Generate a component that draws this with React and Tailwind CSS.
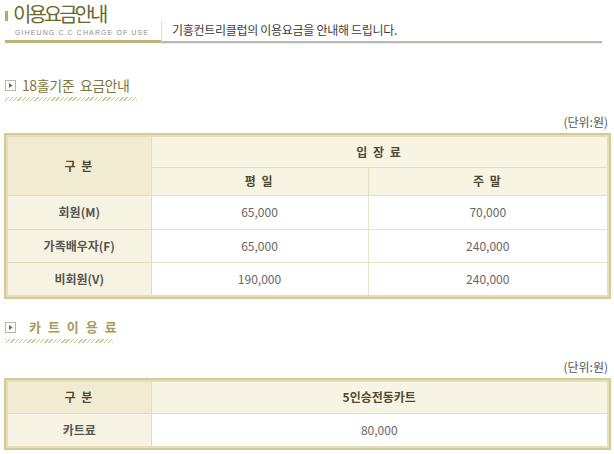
import React from 'react';

const SectionTitle = ({ children, hatch, className }) => (
  <div className="ml-[5px]">
    <div className="flex items-center h-[18px]">
      <svg width="11" height="11" viewBox="0 0 11 11" className="shrink-0">
        <rect x="0.5" y="0.5" width="10" height="10" fill="#fff" stroke="#b9b6a4" />
        <path d="M4 3 L7.5 5.5 L4 8 Z" fill="#6b6840" />
      </svg>
      <span className={className}>{children}</span>
    </div>
    <div
      className="mt-[3px] h-[4px] bg-[repeating-linear-gradient(-45deg,#c9c08a_0px,#c9c08a_1px,transparent_1px,transparent_3px)]"
      style={{ width: hatch }}
    />
  </div>
);

const Unit = () => (
  <div className="flex justify-end pr-[6px] text-[12px] leading-[14px] text-[#555]">(단위:원)</div>
);

const App = () => {
  const rows = [
    { name: '회원(M)', weekday: '65,000', weekend: '70,000' },
    { name: '가족배우자(F)', weekday: '65,000', weekend: '240,000' },
    { name: '비회원(V)', weekday: '190,000', weekend: '240,000' },
  ];

  return (
    <div className="w-[614px] h-[454px] overflow-hidden bg-white font-['Noto_Sans_CJK_KR','Noto_Sans',sans-serif]">
      {/* page header */}
      <div className="flex h-[43px]">
        <div className="ml-[5px] w-[156px] border-b-[3px] border-[#bdb476]">
          <div className="flex items-center h-[26px] pt-[2px]">
            <div className="w-[3px] h-[10px] bg-[#b5ac62] mr-[5px] mt-[3px]" />
            <span className="text-[20px] leading-[22px] tracking-[-3px] text-[#6b682c]">이용요금안내</span>
          </div>
          <div className="pl-[10px] mt-[2px] whitespace-nowrap text-[7px] leading-[10px] tracking-[1.1px] text-[#8d8d88] font-['Liberation_Sans',sans-serif]">
            GIHEUNG C.C CHARGE OF USE
          </div>
        </div>
        <div className="flex-1 mr-[12px] self-end h-[22px] flex items-center pl-[10px] pb-[2px] border-l border-[#dcdcd6] border-b-2 border-b-[#b8b8b0] shadow-[0_1px_0_#ecece6] text-[12px] text-[#3c3c3c] tracking-[-0.3px]">
          기흥컨트리클럽의 이용요금을 안내해 드립니다.
        </div>
      </div>

      {/* 18 holes */}
      <div className="mt-[33px]">
        <SectionTitle hatch={132} className="ml-[6px] text-[14px] tracking-[-0.4px] text-[#7d7540]">
          18홀기준&nbsp; 요금안내
        </SectionTitle>
      </div>
      <div className="mt-[14px]">
        <Unit />
      </div>
      <div className="mt-[4px] mx-[4px] mr-[3px] border-2 border-[#d3ca94] bg-[#e5deb8] p-[2px]">
        <table className="w-full border-collapse text-[12px]">
          <colgroup>
            <col className="w-[143px]" />
            <col className="w-[217px]" />
            <col />
          </colgroup>
          <tbody>
            <tr className="h-[30px]">
              <th rowSpan={2} className="bg-[#f1ebd2] border-r border-b border-[#e4dcbd] font-bold text-[#4f4b32] tracking-[1.5px]">
                구 분
              </th>
              <th colSpan={2} className="bg-[#f8f4e4] border-b border-[#e4dcbd] font-bold text-[#4f4b32] tracking-[1.5px]">
                입 장 료
              </th>
            </tr>
            <tr className="h-[28px]">
              <th className="bg-[#f8f4e4] border-r border-b border-[#e4dcbd] font-bold text-[#4f4b32] tracking-[1.5px]">평 일</th>
              <th className="bg-[#f8f4e4] border-b border-[#e4dcbd] font-bold text-[#4f4b32] tracking-[1.5px]">주 말</th>
            </tr>
            {rows.map((r, i) => (
              <tr key={r.name} className={i === 0 ? 'h-[34px]' : 'h-[33px]'}>
                <td className={`bg-[#f7f3e3] border-r border-[#e4dcbd] text-center font-bold text-[#565650] ${i < rows.length - 1 ? 'border-b' : ''}`}>
                  {r.name}
                </td>
                <td className={`bg-white border-r border-[#e8e2c6] text-center text-[#666] ${i < rows.length - 1 ? 'border-b' : ''}`}>
                  {r.weekday}
                </td>
                <td className={`bg-white border-[#e8e2c6] text-center text-[#666] ${i < rows.length - 1 ? 'border-b' : ''}`}>
                  {r.weekend}
                </td>
              </tr>
            ))}
          </tbody>
        </table>
      </div>

      {/* cart */}
      <div className="mt-[19px]">
        <SectionTitle hatch={108} className="ml-[13px] text-[13px] font-bold tracking-[2px] text-[#a49b5a]">
          카 트 이 용 료
        </SectionTitle>
      </div>
      <div className="mt-[17px]">
        <Unit />
      </div>
      <div className="mt-[4px] mx-[4px] mr-[3px] border-2 border-[#d3ca94] bg-[#e5deb8] p-[2px]">
        <table className="w-full border-collapse text-[12px]">
          <colgroup>
            <col className="w-[143px]" />
            <col />
          </colgroup>
          <tbody>
            <tr className="h-[31px]">
              <th className="bg-[#f1ebd2] border-r border-b border-[#e4dcbd] font-bold text-[#4f4b32] tracking-[1.5px]">구 분</th>
              <th className="bg-[#f8f4e4] border-b border-[#e4dcbd] font-bold text-[#4f4b32]">5인승전동카트</th>
            </tr>
            <tr className="h-[33px]">
              <td className="bg-[#f7f3e3] border-r border-[#e4dcbd] text-center font-bold text-[#565650]">카트료</td>
              <td className="bg-white text-center text-[#666]">80,000</td>
            </tr>
          </tbody>
        </table>
      </div>
    </div>
  );
};

export default App;
